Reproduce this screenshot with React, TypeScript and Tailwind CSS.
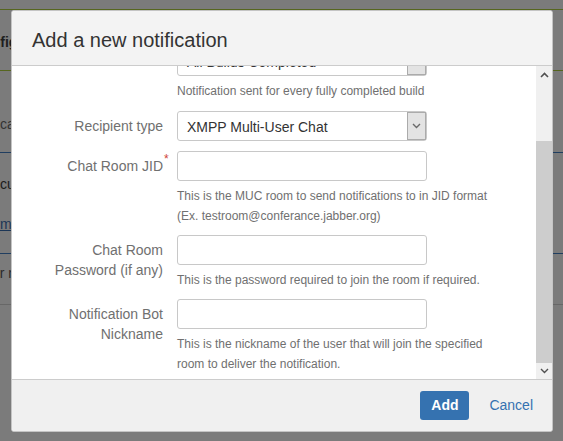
import React from "react";

function ChevronUp() {
  return (
    <svg width="9" height="6" viewBox="0 0 9 6" className="block">
      <polyline points="1,5 4.5,1.5 8,5" fill="none" stroke="#505050" strokeWidth="1.6" />
    </svg>
  );
}
function ChevronDown({ color = "#505050" }: { color?: string }) {
  return (
    <svg width="9" height="6" viewBox="0 0 9 6" className="block">
      <polyline points="1,1 4.5,4.5 8,1" fill="none" stroke={color} strokeWidth="1.4" />
    </svg>
  );
}

function SelectBox({ value, arrow = true }: { value: string; arrow?: boolean }) {
  return (
    <div className="flex h-[30px] w-[250px] items-stretch rounded-[3px] border border-[#c8c8c8] bg-white">
      <div className="flex flex-1 items-center pl-[9px] pt-[3px] text-[14px] text-[#333]">{value}</div>
      <div className="flex w-[19px] items-center justify-center border border-[#ababab] bg-[#e3e3e3]">
        {arrow && <ChevronDown color="#6a6a6a" />}
      </div>
    </div>
  );
}

function TextInput() {
  return <div className="h-[30px] w-[250px] rounded-[3px] border border-[#c8c8c8] bg-white" />;
}

function Field({
  label,
  required,
  control,
  desc,
  className,
}: {
  label: React.ReactNode;
  required?: boolean;
  control: React.ReactNode;
  desc?: React.ReactNode;
  className?: string;
}) {
  return (
    <div className={"flex gap-[14px] " + (className ?? "")}>
      <div className="w-[151px] pt-[5px] text-right text-[14px] leading-[20px] text-[#707070]">
        <span className="relative">
          {label}
          {required && (
            <span className="absolute left-full top-[-5px] pl-[1px] text-[12px] leading-[12px] text-[#d04437]">*</span>
          )}
        </span>
      </div>
      <div className="flex flex-col">
        {control}
        {desc && (
          <div className="mt-[5px] w-[330px] text-[12px] leading-[20px] text-[#707070]">{desc}</div>
        )}
      </div>
    </div>
  );
}

export default function App() {
  return (
    <div className="relative h-[441px] w-[563px] overflow-hidden bg-[#7b7b7b] [font-family:Liberation_Sans,Arial,sans-serif]">
      {/* dimmed page behind the dialog */}
      <div className="flex flex-col">
        <div className="h-[10px] border-b border-[#56661f]" />
        <div className="flex h-[61px] items-center border-b border-[#56661f] pt-[5px]">
          <span className="ml-[-27px] whitespace-nowrap text-[14px] font-bold text-[#1e1e1e]">Configuration</span>
        </div>
        <div className="flex h-[82px] flex-col border-b border-[#203e60]">
          <span className="ml-[-32px] mt-[44px] whitespace-nowrap text-[14px] leading-[18px] text-[#333]">Notifications</span>
        </div>
        <div className="flex h-[101px] flex-col border-b border-[#203e60]">
          <span className="ml-[-18px] mt-[22px] whitespace-nowrap text-[14px] leading-[18px] text-[#1a1a1a]">Document</span>
          <span className="ml-[-21px] mt-[22px] whitespace-nowrap text-[14px] leading-[18px] text-[#1c3656] underline">Format</span>
        </div>
        <div className="flex h-[51px] flex-col border-b border-[#676767]">
          <span className="ml-[-12px] mt-[10px] whitespace-nowrap text-[14px] leading-[18px] text-[#2a2a2a]">for notifications</span>
        </div>
      </div>

      {/* dialog */}
      <div className="absolute left-[11px] top-[10px] flex h-[422px] w-[542px] flex-col overflow-hidden rounded-[3px] border border-[#c4c4c4] bg-white">
        <div className="flex h-[55px] shrink-0 items-center border-b border-[#cccccc] bg-[#f3f3f3] pl-[20px] pt-[4px]">
          <h2 className="text-[20px] text-[#333]">Add a new notification</h2>
        </div>

        <div className="flex h-[313px] shrink-0">
          <div className="flex-1 overflow-hidden">
            <div className="mt-[-20px] flex flex-col">
              <Field
                label={<span className="invisible">Event</span>}
                control={<SelectBox value="All Builds Completed" arrow={false} />}
                desc="Notification sent for every fully completed build"
              />
              <Field
                className="mt-[10px]"
                label="Recipient type"
                control={<SelectBox value="XMPP Multi-User Chat" />}
              />
              <Field
                className="mt-[10px]"
                label="Chat Room JID"
                required
                control={<TextInput />}
                desc={
                  <>
                    This is the MUC room to send notifications to in JID format
                    <br />
                    (Ex. testroom@conferance.jabber.org)
                  </>
                }
              />
              <Field
                className="mt-[9px]"
                label={
                  <>
                    Chat Room
                    <br />
                    Password (if any)
                  </>
                }
                control={<TextInput />}
                desc="This is the password required to join the room if required."
              />
              <Field
                className="mt-[9px]"
                label={
                  <>
                    Notification Bot
                    <br />
                    Nickname
                  </>
                }
                control={<TextInput />}
                desc={
                  <>
                    This is the nickname of the user that will join the specified
                    <br />
                    room to deliver the notification.
                  </>
                }
              />
            </div>
          </div>
          <div className="flex w-[16px] flex-col bg-[#f0f0f0]">
            <div className="flex h-[17px] items-center justify-center">
              <ChevronUp />
            </div>
            <div className="h-[58px]" />
            <div className="h-[222px] bg-[#cdcdcd]" />
            <div className="flex h-[16px] items-center justify-center">
              <ChevronDown />
            </div>
          </div>
        </div>

        <div className="flex flex-1 items-center justify-end gap-[20px] border-t border-[#cccccc] bg-[#f0f0f0] pr-[19px]">
          <button className="h-[29px] w-[49px] rounded-[3px] bg-[#3572b0] text-[14px] font-bold text-white">Add</button>
          <span className="text-[14px] text-[#3572b0]">Cancel</span>
        </div>
      </div>
    </div>
  );
}
